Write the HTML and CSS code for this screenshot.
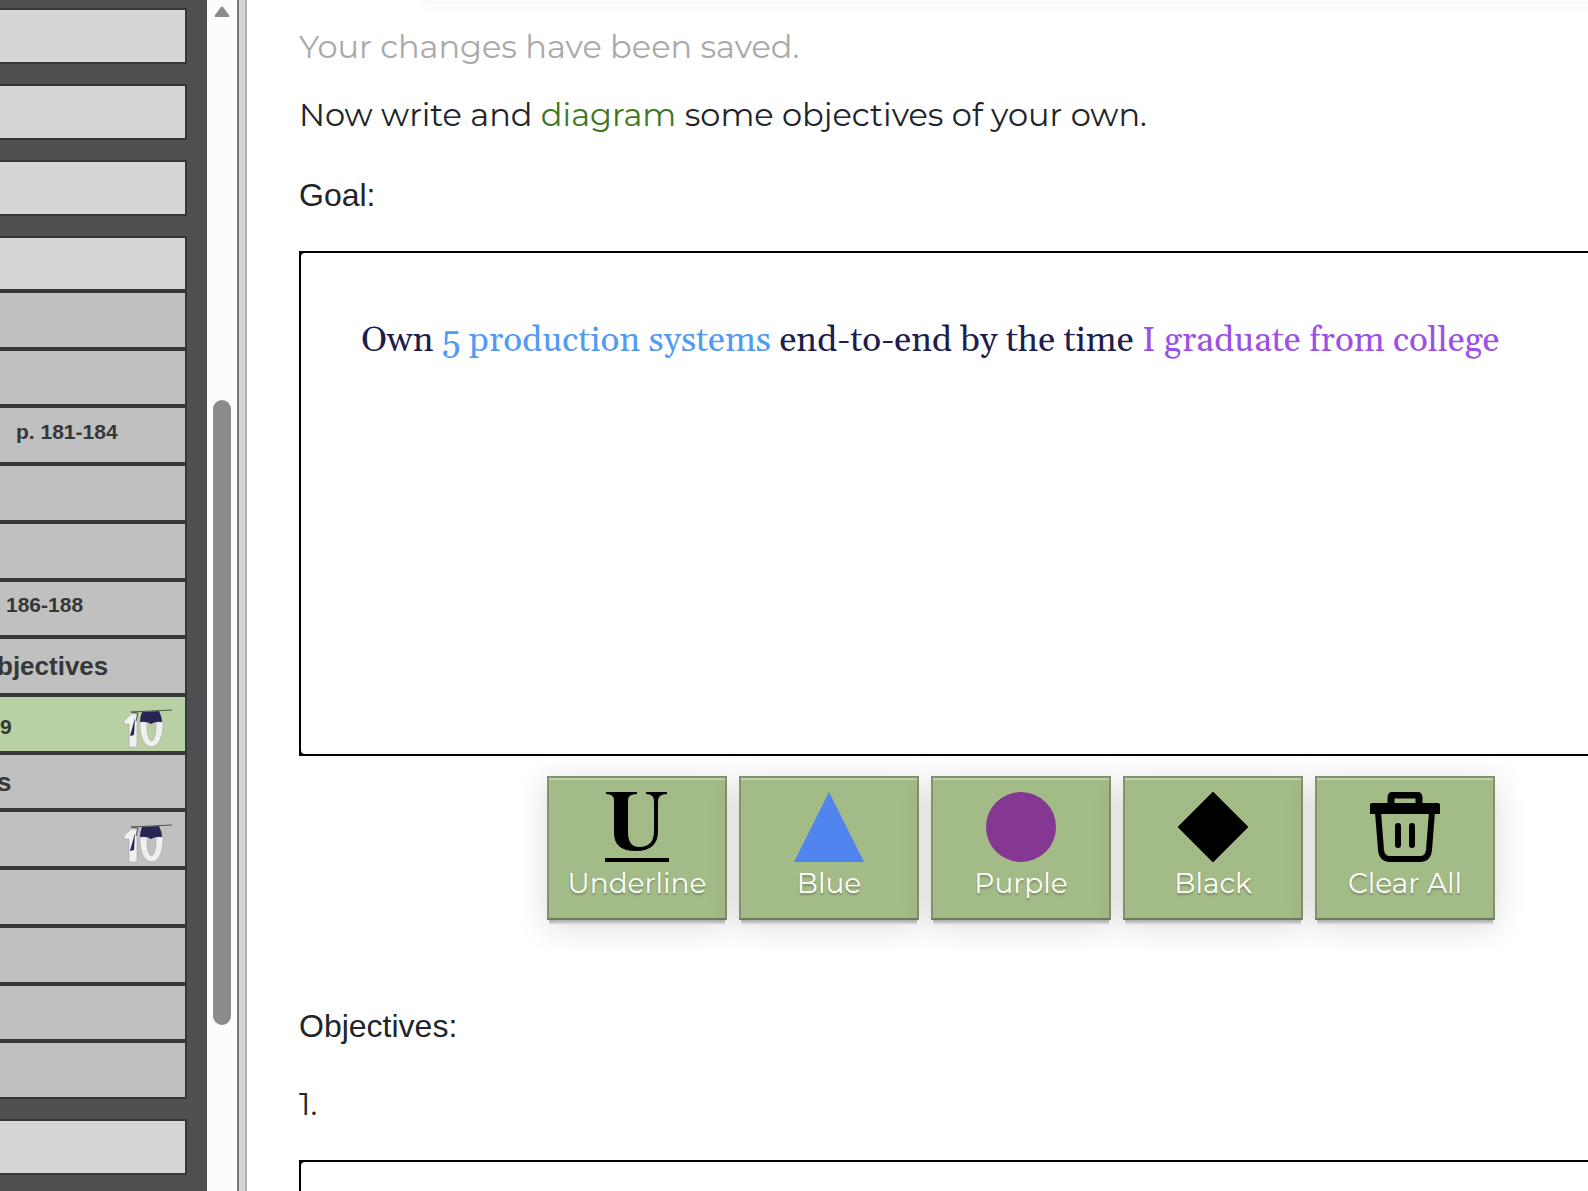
FILE: index.html
```
<!DOCTYPE html>
<html lang="en">
<head>
  <meta charset="UTF-8">
  <title>Objectives</title>
  <link rel="stylesheet" href="styles.css">
</head>
<body>
<div class="page">
  <nav class="sidebar">
    <div class="chapter"></div>
    <div class="chapter"></div>
    <div class="chapter"></div>
    <div class="chapter open">
      <div class="chapter-title"></div>
      <ul class="lessons">
        <li></li>
        <li></li>
        <li class="pages"><a href="#">p. 181-184</a></li>
        <li></li>
        <li></li>
        <li class="pages near"><a href="#">186-188</a></li>
        <li class="topic"><a href="#">bjectives</a></li>
        <li class="current graded">
          <a href="#">9</a>
          <svg class="ten" viewBox="0 0 50 40">
            <path d="M1 12 L8 5 H14 V38 H6 V15 H1 Z" fill="#f0f0f0" stroke="#999" stroke-width=".5"/>
            <path d="M17 13 C16 46 41 46 40 13 H33 C34 38 23 38 24 13 Z" fill="#f0f0f0" stroke="#999" stroke-width=".5"/>
            <path d="M19 3 L36 2 Q39 8 39 13 Q33 12 28 15 Q24 12 17 13 Q17 8 19 3 Z" fill="#282456"/>
            <path d="M12 9 L11 26 L7 27 Z" fill="#282456"/>
            <path d="M8 3 L49 1 M8 3 L15 4 L13 12" fill="none" stroke="#4b5546"/>
          </svg>
        </li>
        <li class="topic"><a href="#">s</a></li>
        <li class="graded">
          <svg class="ten" viewBox="0 0 50 40">
            <path d="M1 12 L8 5 H14 V38 H6 V15 H1 Z" fill="#f0f0f0" stroke="#999" stroke-width=".5"/>
            <path d="M17 13 C16 46 41 46 40 13 H33 C34 38 23 38 24 13 Z" fill="#f0f0f0" stroke="#999" stroke-width=".5"/>
            <path d="M19 3 L36 2 Q39 8 39 13 Q33 12 28 15 Q24 12 17 13 Q17 8 19 3 Z" fill="#282456"/>
            <path d="M12 9 L11 26 L7 27 Z" fill="#282456"/>
            <path d="M8 3 L49 1 M8 3 L15 4 L13 12" fill="none" stroke="#4b5546"/>
          </svg>
        </li>
        <li></li>
        <li></li>
        <li></li>
        <li></li>
      </ul>
    </div>
    <div class="chapter"></div>
  </nav>
  <div class="scrollbar">
    <svg class="arrow" viewBox="0 0 16 12"><path d="M7 1 Q8 0 9 1 L15 9 Q16 11 14 11 H2 Q0 11 1 9 Z" fill="#8b8b8b"/></svg>
    <div class="thumb"></div>
  </div>
  <div class="divider"></div>
  <main class="content">
    <div class="lesson">
      <!-- lower edge of the previous exercise's tools -->
      <div class="tools-edge"></div>
      <p class="saved">Your changes have been saved.</p>
      <p class="intro">Now write and <a href="#">diagram</a> some objectives of your own.</p>
      <h2 id="goal">Goal:</h2>
      <div class="editor">
        <div class="text" contenteditable="true" spellcheck="false" role="textbox" aria-labelledby="goal">Own <span class="blue">5 production systems</span> end-to-end by the time <span class="purple">I graduate from college</span></div>
      </div>
      <div class="tools">
        <button type="button">
          <svg viewBox="0 0 70 70">
            <path d="M4 0 H35 V2 Q26 2 26 8 V40 Q26 55 37 55 Q52 55 52 39 V9 Q52 2 44 2 V0 H65 V2 Q56 2 56 9 V39 Q56 59 34 59 Q12 59 12 41 V8 Q12 2 4 2 Z M3 66 H67 V70 H3 Z"/>
          </svg>
          Underline
        </button>
        <button type="button">
          <svg viewBox="0 0 70 70"><path d="M35 0 L70 70 H0 Z" fill="#5084ee"/></svg>
          Blue
        </button>
        <button type="button">
          <svg viewBox="0 0 70 70"><circle cx="35" cy="35" r="35" fill="#853891"/></svg>
          Purple
        </button>
        <button type="button">
          <svg viewBox="0 0 70 70"><path d="M35 1 L69 35 L35 69 L1 35 Z" stroke="#000" stroke-width="2" stroke-linejoin="round"/></svg>
          Black
        </button>
        <button type="button">
          <svg viewBox="0 0 70 70">
            <path d="M2 11 H68 Q70 11 70 13 V22 H0 V13 Q0 11 2 11 Z"/>
            <path d="M21 13 V6 Q21 3 24 3 H46 Q49 3 49 6 V13" fill="none" stroke="#000" stroke-width="7"/>
            <path d="M8 20 L11 58 Q12 67 20 67 H50 Q58 67 59 58 L62 20 M28 34 V53 M42 34 V53" fill="none" stroke="#000" stroke-width="6" stroke-linecap="round"/>
          </svg>
          Clear All
        </button>
      </div>
      <h2>Objectives:</h2>
      <p class="number" id="first">1.</p>
      <div class="editor">
        <div class="text" contenteditable="true" role="textbox" aria-labelledby="first"></div>
      </div>
    </div>
  </main>
</div>
</body>
</html>
```
FILE: styles.css
```
* {
  box-sizing: border-box;
  margin: 0;
  padding: 0;
}

body {
  background: #fff;
  font-family: Montserrat, Inter, sans-serif;
  color: #212529;
}

a {
  color: inherit;
  text-decoration: none;
}

.page {
  display: flex;
  height: 100vh;
  overflow: hidden;
}

/* sidebar */
.sidebar {
  flex: 0 0 207px;
  display: flex;
  flex-direction: column;
  gap: 20px;
  padding: 8px 20px 0 0;
  background: #4f5052;
  font-family: "Liberation Sans", Arial, sans-serif;
  font-weight: bold;
  color: #363739;
}

.chapter {
  flex: none;
  height: 56px;
  background: #d5d5d5;
  border: 2px solid #363739;
  border-left: 0;
}

.chapter.open {
  height: auto;
  border: 0;
}

.chapter-title {
  height: 55px;
  border: 2px solid #363739;
  border-left: 0;
}

.lessons {
  display: grid;
  grid-auto-rows: 1fr;
  height: 808px;
  list-style: none;
}

.lessons li {
  display: flex;
  align-items: center;
  justify-content: space-between;
  padding-right: 12px;
  background: #c0c0c0;
  border: 2px solid #363739;
  border-left: 0;
  font-size: 21px;
  line-height: 24px;
  white-space: nowrap;
}

.lessons .pages {
  padding: 0 0 6px 16px;
}

.lessons .near {
  padding-left: 6px;
}

.lessons .topic {
  font-size: 26px;
  text-indent: -3px;
}

.lessons .graded {
  padding-top: 6px;
}

.lessons .current {
  background: #b9cfa4;
}

.ten {
  width: 50px;
  height: 40px;
  margin: 4px 0 0 auto;
}

/* scrollbar and frame edge */
.scrollbar {
  flex: 0 0 30px;
  display: flex;
  flex-direction: column;
  align-items: center;
  padding-top: 6px;
  background: #fcfcfc;
}

.arrow {
  width: 16px;
  height: 12px;
}

.thumb {
  width: 18px;
  height: 625px;
  margin-top: 382px;
  background: #8b8b8b;
  border-radius: 9px;
}

.divider {
  flex: 0 0 10px;
  background: #d5d5d5;
  border: solid #787878;
  border-width: 0 2px;
  border-right-color: #b0b0b0;
}

/* lesson */
.content {
  flex: 1;
  min-width: 0;
  overflow: hidden;
  padding-left: 52px;
}

.lesson {
  margin-right: -155px;
}

.tools-edge {
  height: 1px;
  margin: 0 0 22px 132px;
  box-shadow: 0 -8px 20px 8px rgba(0, 0, 0, .06);
}

.saved,
.intro,
.number {
  font-size: 32px;
  font-weight: 400;
  line-height: 48px;
}

.saved {
  margin-bottom: 20px;
  color: #a9a9a9;
}

.intro {
  margin-bottom: 32px;
}

.intro a {
  color: #40761f;
}

h2 {
  margin-bottom: 32px;
  font-family: "Liberation Sans", Arial, sans-serif;
  font-size: 32px;
  font-weight: normal;
  line-height: 48px;
}

.number {
  margin-bottom: 34px;
  line-height: 44px;
}

.editor {
  padding: 2px;
  background: #000;
}

.text {
  height: 501px;
  padding: 62px 60px;
  background: #fff;
  border-radius: 4px;
  outline: 0;
  font-family: Georgia, Gelasio, "Liberation Serif", serif;
  font-size: 35px;
  line-height: 52px;
  color: #201c4b;
}

.blue {
  color: #539af3;
}

.purple {
  color: #9b51e8;
}

.tools {
  display: flex;
  justify-content: center;
  gap: 12px;
  margin: 20px 0 82px;
}

.tools button {
  width: 180px;
  height: 144px;
  padding-bottom: 1px;
  background: #a3bb86;
  border: 2px solid #7f946a;
  border-bottom-color: #6c7e59;
  box-shadow: inset 0 2px 0 #c2d0ae, 0 4px 0 -2px #b5b5b5, 0 6px 0 -2px #d2d2d2, 0 6px 30px rgba(0, 0, 0, .15);
  font-family: inherit;
  font-size: 28px;
  line-height: 40px;
  color: #fff;
  text-shadow: 0 2px 2px rgba(0, 0, 0, .25);
  cursor: pointer;
}

.tools svg {
  display: block;
  width: 70px;
  height: 70px;
  margin: 0 auto 1px;
}
```
